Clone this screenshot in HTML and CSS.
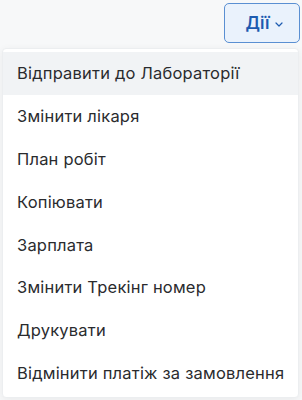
FILE: index.html
```html
<!DOCTYPE html>
<html lang="uk">
<head>
    <meta charset="UTF-8">
    <meta name="viewport" content="width=device-width, initial-scale=1.0">
    <title>Дії</title>
    <link rel="stylesheet" href="styles.css">
</head>
<body>
    <div class="toolbar">
        <button class="actions-btn">Дії
            <svg class="chevron" width="8" height="5" viewBox="0 0 8 5"><path d="M1 1l3 3 3-3" fill="none" stroke="currentColor" stroke-width="1.2" stroke-linecap="round" stroke-linejoin="round"/></svg>
        </button>
    </div>
    <ul class="menu">
        <li class="active">Відправити до Лабораторії</li>
        <li>Змінити лікаря</li>
        <li>План робіт</li>
        <li>Копіювати</li>
        <li>Зарплата</li>
        <li>Змінити Трекінг номер</li>
        <li>Друкувати</li>
        <li>Відмінити платіж за замовлення</li>
    </ul>
</body>
</html>
```
FILE: styles.css
```css
html, body {
    margin: 0;
    height: 100%;
    overflow: hidden;
    background: #f7f8f9;
    font-family: Inter, "Noto Sans", sans-serif;
}
.toolbar {
    display: flex;
    justify-content: flex-end;
    padding: 3px 2px 0 0;
}
.actions-btn {
    display: flex;
    align-items: center;
    justify-content: center;
    gap: 5px;
    width: 76px;
    height: 40px;
    box-sizing: border-box;
    border: 1px solid #5a8fd2;
    border-radius: 5px;
    background: #eaf2fc;
    color: #1d5bb0;
    font-family: inherit;
    font-size: 17px;
    font-weight: 600;
    padding: 0 0 0 4px;
}
.chevron {
    margin-top: 2px;
}
.menu {
    list-style: none;
    margin: 5px 3px 0 2px;
    padding: 3px 0;
    background: #fff;
    border: 1px solid #eceef0;
    border-radius: 4px;
    box-shadow: 0 2px 8px rgba(0,0,0,0.06);
}
.menu li {
    height: 42.8px;
    display: flex;
    align-items: center;
    padding: 0 14px;
    font-size: 16.5px;
    letter-spacing: 0.2px;
    color: #2a2b2e;
    white-space: nowrap;
}
.menu li.active {
    background: #f1f3f5;
}
```
